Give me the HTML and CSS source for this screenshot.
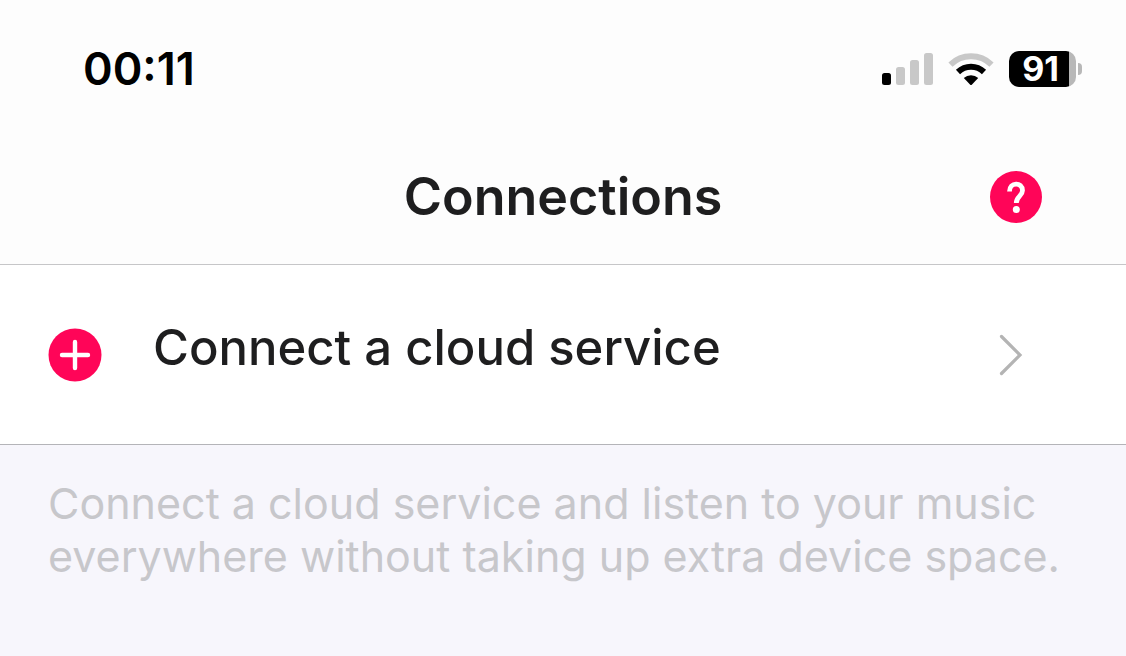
FILE: index.html
```html
<!DOCTYPE html>
<html lang="en">
<head>
<meta charset="utf-8">
<meta name="viewport" content="width=device-width, initial-scale=1">
<title>Connections</title>
<link rel="stylesheet" href="styles.css">
</head>
<body>
<div class="status">
  <time class="clock">00:11</time>
  <div class="indicators">
    <svg class="signal" width="53" height="34" viewBox="0 0 53 34" aria-hidden="true"><rect x="2" y="21" width="9" height="12" rx="2.500"/><g fill="#c8c8c8"><rect x="16" y="15" width="9" height="18" rx="2.500"/><rect x="30" y="8" width="9" height="25" rx="2.500"/><rect x="44" y="1" width="9" height="32" rx="2.500"/></g></svg>
    <svg class="wifi" width="46" height="34" viewBox="0 0 46 34" aria-hidden="true"><g fill="none" stroke-width="6"><path d="M2.500 12.600A29.500 29.500 0 0 1 43.500 12.600" stroke="#c8c8c8"/><path d="M10 20A18.800 18.800 0 0 1 36 20" stroke="#000"/></g><path d="M15.800 26A10.500 10.500 0 0 1 30.200 26L24 32.500Q23 33.500 22 32.500Z"/></svg>
    <div class="battery"><span class="level">91</span><span class="cap"></span></div>
  </div>
</div>
<header class="header">
  <h1 class="title">Connections</h1>
  <button class="help" type="button" aria-label="Help">
    <svg width="52" height="52" viewBox="0 0 52 52" aria-hidden="true"><circle cx="26" cy="26" r="26" fill="#ff0558"/><path d="M19.500 20.500C19.500 10.800 32.500 10.800 32.500 19.500C32.500 25 26.300 25.500 26.300 32" fill="none" stroke="#fff" stroke-width="4.800"/><circle cx="26.300" cy="38.500" r="3.500" fill="#fff"/></svg>
  </button>
</header>
<main>
  <button class="row" type="button">
    <svg class="plus" width="54" height="54" viewBox="0 0 54 54" aria-hidden="true"><circle cx="27" cy="27" r="26.500" fill="#ff0558"/><path d="M27 14V40M14 27H40" stroke="#fff" stroke-width="4.400" stroke-linecap="round"/></svg>
    <span class="label">Connect a cloud service</span>
    <svg class="chevron" width="24" height="42" viewBox="0 0 24 42" aria-hidden="true"><path d="M2.500 2.500L21 21L2.500 39.500" fill="none" stroke="#b4b4b4" stroke-width="3.200" stroke-linecap="round"/></svg>
  </button>
  <p class="note">Connect a cloud service and listen to your music everywhere without taking up extra device space.</p>
</main>
</body>
</html>
```
FILE: styles.css
```css
* { box-sizing: border-box; }
body { margin: 0; min-height: 100vh; background: #f7f6fc; color: #1e1e1f; font-family: Inter, "Liberation Sans", sans-serif; }
.status { display: flex; justify-content: space-between; align-items: center; height: 132px; padding: 6px 44px 0 83px; background: #fdfdfd; color: #000; }
.clock { font-size: 45px; font-weight: 600; line-height: 52px; }
.indicators { display: flex; align-items: center; gap: 15px; }
.battery { display: flex; align-items: center; gap: 2px; }
.level { width: 67px; height: 36px; padding-right: 4px; border-radius: 10px; background: linear-gradient(90deg, #000 90%, #b8b8b8 90%); color: #fff; font-size: 34px; font-weight: 700; line-height: 36px; text-align: center; }
.cap { width: 4px; height: 12px; border-radius: 0 5px 5px 0; background: #b8b8b8; }
.header { display: grid; grid-template-columns: 1fr auto 1fr; align-items: center; height: 133px; border-bottom: 1px solid #c6c6c8; padding: 0 84px 2px; background: #fdfdfd; }
.title { grid-column: 2; margin: 0; font-size: 52px; font-weight: 600; line-height: 64px; }
.help { justify-self: end; display: flex; padding: 0; border: 0; background: none; }
.row { display: flex; align-items: center; width: 100%; height: 180px; padding: 0 103px 0 48px; border: 0; border-bottom: 1px solid #b4b4b8; background: #fff; color: inherit; font: inherit; text-align: left; }
.label { flex: 1; margin-left: 51px; padding-bottom: 14px; font-size: 49px; font-weight: 450; line-height: 60px; }
.note { margin: 0; padding: 32px 48px; color: #c7c7cb; font-size: 43px; line-height: 53px; }
```
